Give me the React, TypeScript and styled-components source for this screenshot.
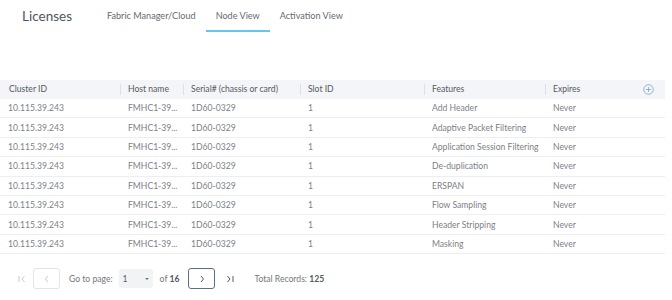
import React from "react";
import styled, { createGlobalStyle } from "styled-components";

const Global = createGlobalStyle`
  html, body { margin: 0; padding: 0; background: #fff; }
  body { font-family: Lato, "Open Sans", sans-serif; color: #666; }
`;

const Page = styled.div`
  width: 672px;
  height: 300px;
  display: flex;
  flex-direction: column;
  overflow: hidden;
`;

const TopBar = styled.div`
  display: flex;
  align-items: flex-end;
  height: 32px;
  padding-left: 22px;
`;

const Title = styled.div`
  font-size: 13.5px;
  color: #50555b;
  padding-bottom: 8px;
  margin-right: 25px;
`;

const Tab = styled.div<{ $active?: boolean }>`
  font-size: 9.1px;
  color: #666b71;
  padding: 0 10px 9px;
  border-bottom: 2px solid ${(p) => (p.$active ? "#64c6f0" : "transparent")};
`;

const Table = styled.div`
  margin-top: 48px;
  width: 665px;
  font-size: 8.6px;
`;

const cols = "120px 63px 117px 124px 121px 95px 25px";

const HeaderRow = styled.div`
  display: grid;
  grid-template-columns: ${cols};
  height: 19px;
  align-items: center;
  background: #f3f5f8;
  color: #555a60;
`;

const HeadCell = styled.div<{ $divider?: boolean }>`
  padding-left: ${(p) => (p.$divider ? "7px" : "8px")};
  border-left: 1px solid ${(p) => (p.$divider ? "#dde0e4" : "transparent")};
  height: 11px;
  line-height: 11px;
  white-space: nowrap;
`;

const Row = styled.div`
  display: grid;
  grid-template-columns: ${cols};
  height: 19.4px;
  align-items: center;
  border-bottom: 1px solid #eceef1;
  box-sizing: border-box;
  color: #7c8187;
`;

const Cell = styled.div`
  padding-left: 8px;
  white-space: nowrap;
`;

const PlusIcon = styled.svg`
  display: block;
  margin-left: 3px;
`;

const Pager = styled.div`
  display: flex;
  align-items: center;
  margin-top: 14px;
  padding-left: 16px;
  font-size: 8.6px;
  color: #73787e;
`;

const IconBtn = styled.div<{ $boxed?: boolean; $dark?: boolean }>`
  width: ${(p) => (p.$boxed ? "27px" : "12px")};
  height: 21px;
  box-sizing: border-box;
  border: 1px solid ${(p) => (p.$boxed ? (p.$dark ? "#5e6e82" : "#e1e4e8") : "transparent")};
  border-radius: 3px;
  display: flex;
  align-items: center;
  justify-content: center;
  margin-right: ${(p) => (p.$boxed ? "9px" : "5px")};
`;

const Label = styled.span`
  margin-right: 6px;
`;

const Select = styled.div`
  width: 34px;
  height: 19px;
  background: #f2f3f5;
  border-radius: 3px;
  display: flex;
  align-items: center;
  justify-content: space-between;
  padding: 0 4px;
  box-sizing: border-box;
  margin-right: 7px;
  color: #5a5f65;
`;

const Caret = styled.span`
  width: 0;
  height: 0;
  border-left: 2px solid transparent;
  border-right: 2px solid transparent;
  border-top: 2.5px solid #777;
`;

const Strong = styled.b`
  font-weight: 700;
  color: #555a60;
`;

const OfText = styled.span`
  margin-right: 9px;
`;

const Total = styled.span`
  margin-left: 13px;
`;

const rows = [
  "Add Header",
  "Adaptive Packet Filtering",
  "Application Session Filtering",
  "De-duplication",
  "ERSPAN",
  "Flow Sampling",
  "Header Stripping",
  "Masking",
];

const Chevron = ({ dir, color, bar }: { dir: "l" | "r"; color: string; bar?: boolean }) => (
  <svg width="10" height="10" viewBox="0 0 10 10" fill="none" stroke={color} strokeWidth="1">
    {dir === "l" ? (
      <>
        {bar && <path d="M2 2v6" />}
        <path d={bar ? "M7.5 2L5 5l2.5 3" : "M6 2L3.5 5 6 8"} />
      </>
    ) : (
      <>
        <path d={bar ? "M2.5 2L5 5 2.5 8" : "M4 2l2.5 3L4 8"} />
        {bar && <path d="M8 2v6" />}
      </>
    )}
  </svg>
);

export default function App() {
  return (
    <Page>
      <Global />
      <TopBar>
        <Title>Licenses</Title>
        <Tab>Fabric Manager/Cloud</Tab>
        <Tab $active>Node View</Tab>
        <Tab>Activation View</Tab>
      </TopBar>
      <Table>
        <HeaderRow>
          <HeadCell>Cluster ID</HeadCell>
          <HeadCell $divider>Host name</HeadCell>
          <HeadCell $divider>Serial# (chassis or card)</HeadCell>
          <HeadCell $divider>Slot ID</HeadCell>
          <HeadCell $divider>Features</HeadCell>
          <HeadCell $divider>Expires</HeadCell>
          <div>
            <PlusIcon width="11" height="11" viewBox="0 0 12 12" fill="none" stroke="#7fa6c8" strokeWidth="0.9">
              <circle cx="6" cy="6" r="5.2" />
              <path d="M6 3.3v5.4M3.3 6h5.4" />
            </PlusIcon>
          </div>
        </HeaderRow>
        {rows.map((f) => (
          <Row key={f}>
            <Cell>10.115.39.243</Cell>
            <Cell>FMHC1-39...</Cell>
            <Cell>1D60-0329</Cell>
            <Cell>1</Cell>
            <Cell>{f}</Cell>
            <Cell>Never</Cell>
            <div />
          </Row>
        ))}
      </Table>
      <Pager>
        <IconBtn>
          <Chevron dir="l" bar color="#c5cad0" />
        </IconBtn>
        <IconBtn $boxed>
          <Chevron dir="l" color="#c5cad0" />
        </IconBtn>
        <Label>Go to page:</Label>
        <Select>
          <span>1</span>
          <Caret />
        </Select>
        <OfText>
          of <Strong>16</Strong>
        </OfText>
        <IconBtn $boxed $dark>
          <Chevron dir="r" color="#4f5d70" />
        </IconBtn>
        <IconBtn>
          <Chevron dir="r" bar color="#4f5d70" />
        </IconBtn>
        <Total>
          Total Records: <Strong>125</Strong>
        </Total>
      </Pager>
    </Page>
  );
}
